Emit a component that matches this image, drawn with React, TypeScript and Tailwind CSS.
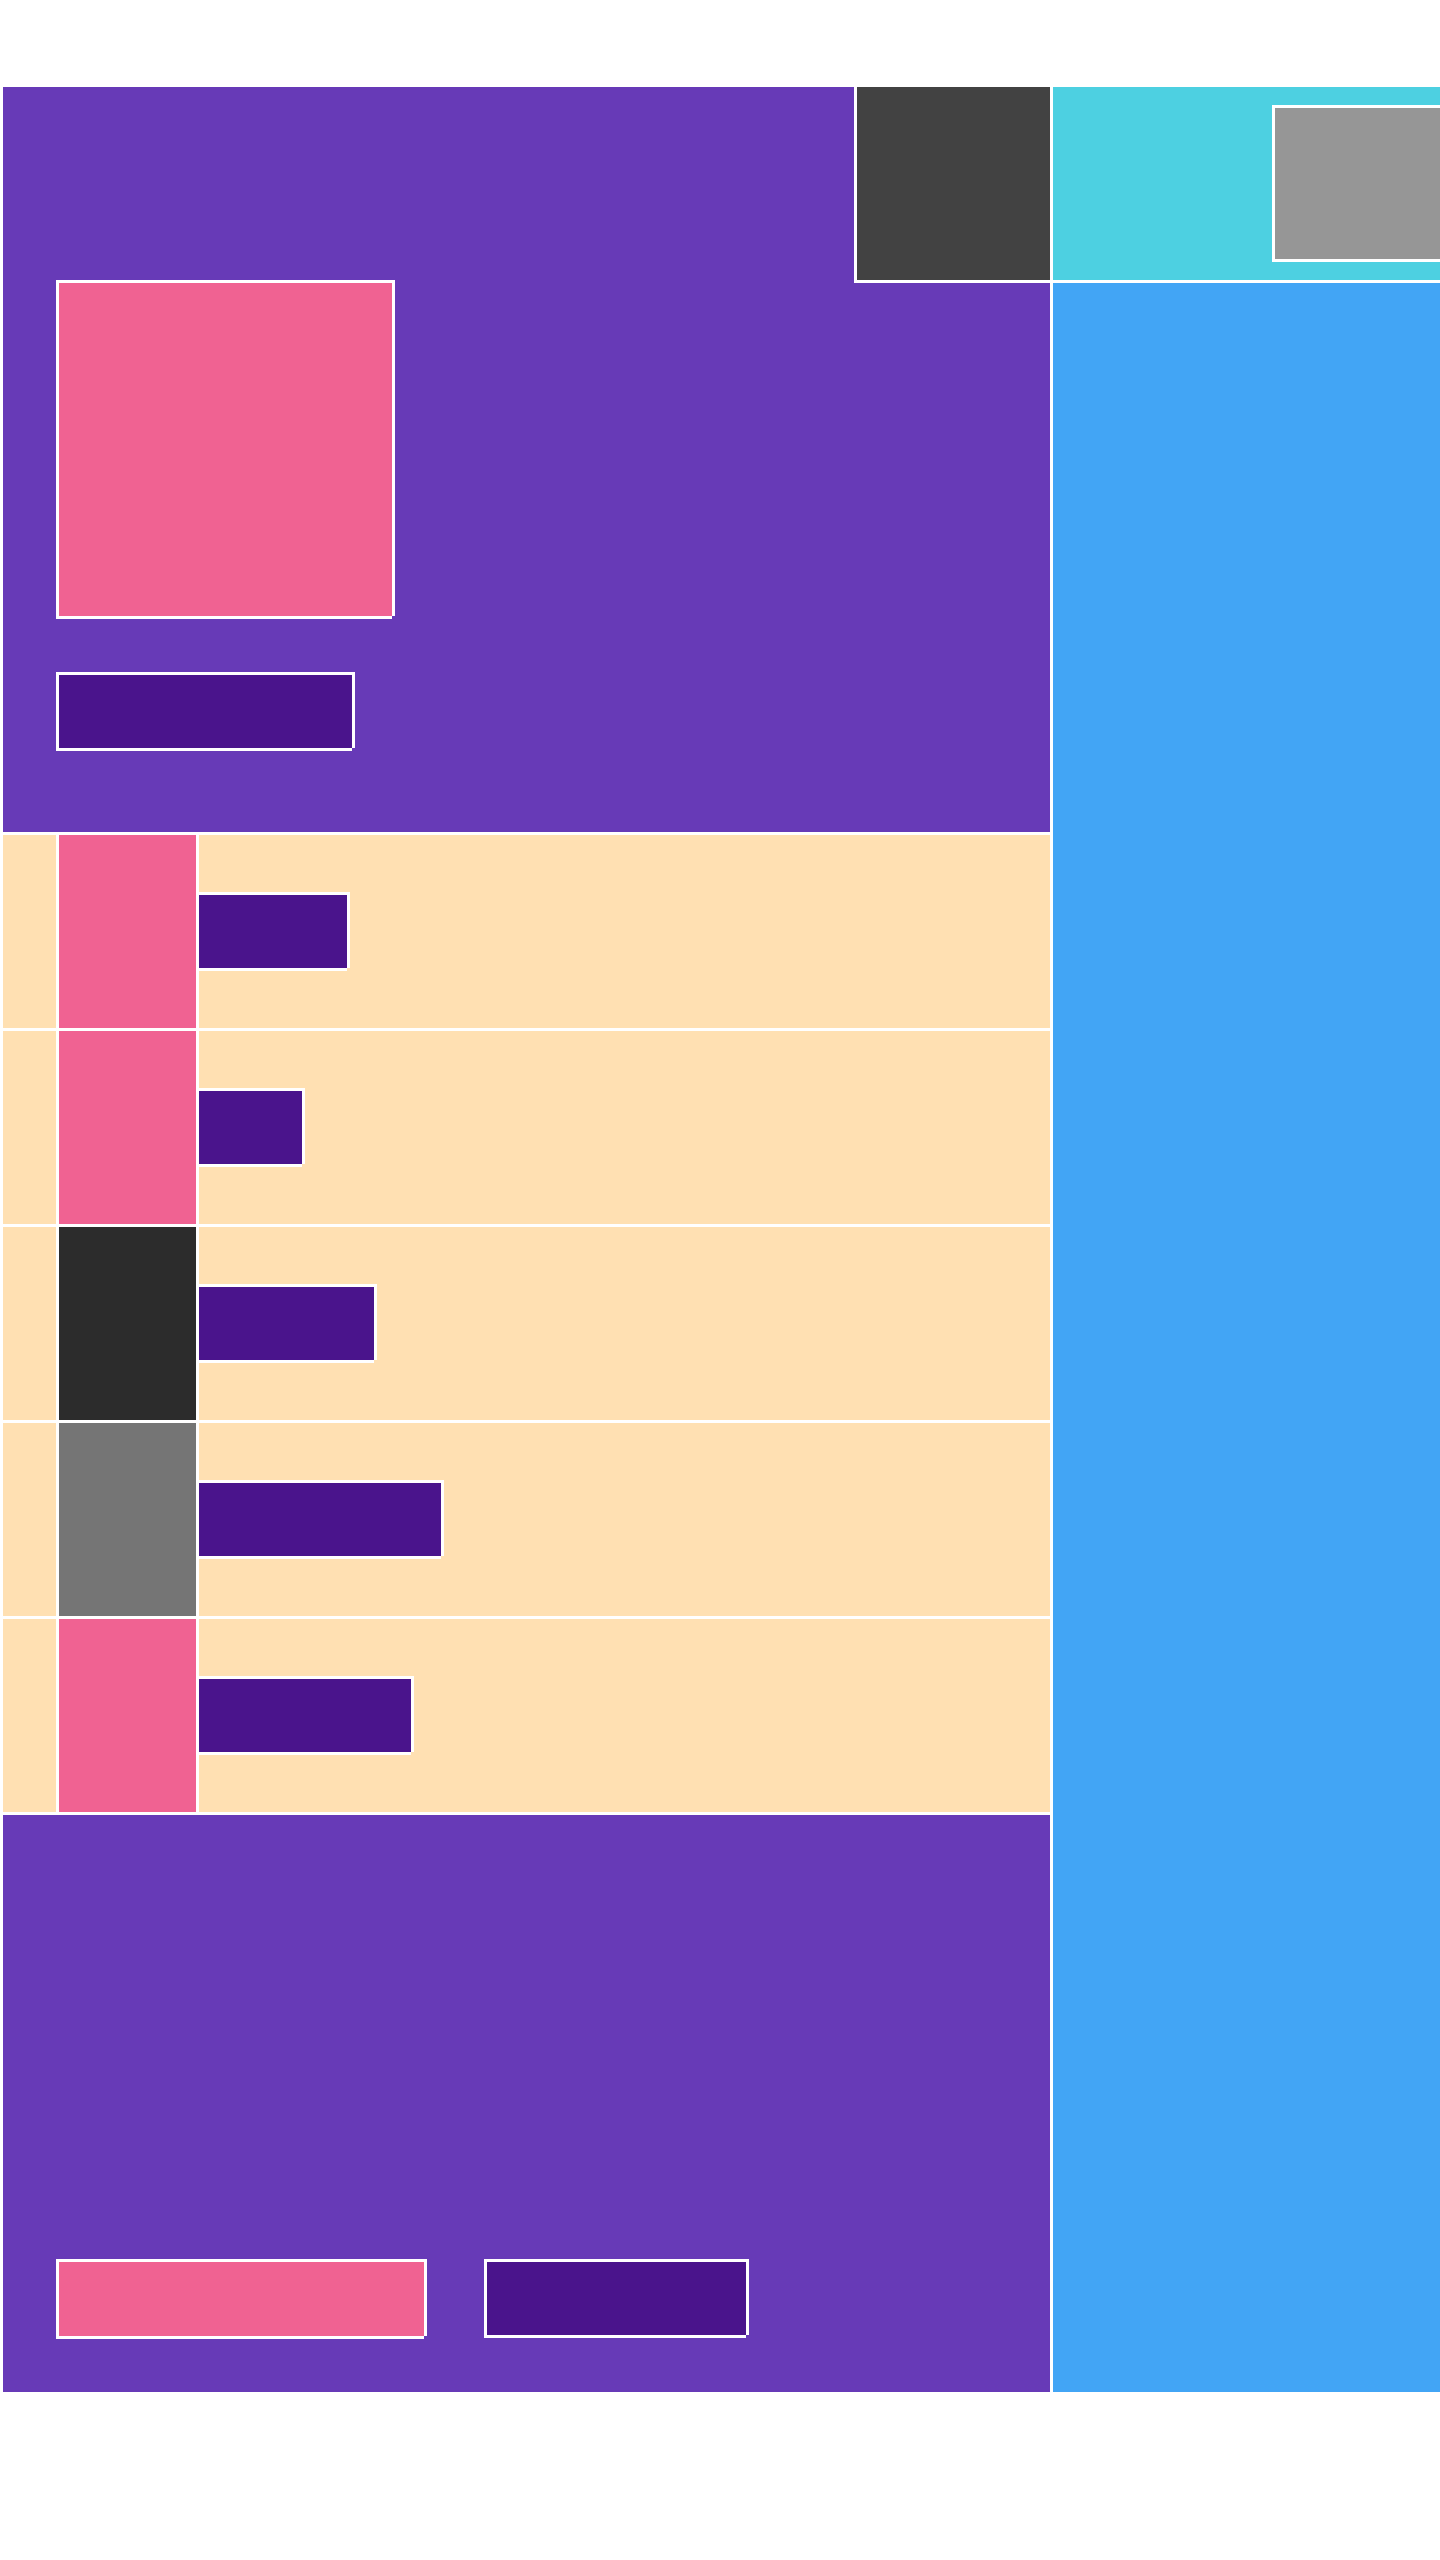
const frame = "border-t-[3px] border-l-[3px] border-white shadow-[3px_0_0_#fff,0_3px_0_#fff]";

const rows = [
  { thumb: "bg-[#f06292]", bar: "w-[151px]" },
  { thumb: "bg-[#f06292]", bar: "w-[106px]" },
  { thumb: "bg-[#2c2c2c]", bar: "w-[178px]" },
  { thumb: "bg-[#757575]", bar: "w-[245px]" },
  { thumb: "bg-[#f06292]", bar: "w-[215px]" },
];

function Row({ thumb, bar }: { thumb: string; bar: string }) {
  return (
    <div className="flex h-[193px] gap-[3px]">
      <div className="w-[53px] bg-[#ffe0b2]" />
      <div className={`w-[137px] ${thumb}`} />
      <div className="flex flex-1 items-start bg-[#ffe0b2]">
        <div className={`-ml-[3px] mt-[57px] h-[76px] bg-[#4a148c] ${frame} ${bar}`} />
      </div>
    </div>
  );
}

export default function App() {
  return (
    <div className="min-h-[2560px] w-full overflow-hidden bg-white pl-[3px] pt-[87px]">
      <div className="flex gap-[3px]">
        {/* main column */}
        <div className="flex w-[1047px] shrink-0 flex-col gap-[3px]">
          <section className="flex h-[745px] flex-col bg-[#673ab7]">
            <div className="flex h-[193px] justify-end">
              <div className="h-[193px] w-[196px] border-l-[3px] border-white bg-[#424242] shadow-[0_3px_0_#fff]" />
            </div>
            <div className={`ml-[53px] h-[336px] w-[336px] bg-[#f06292] ${frame}`} />
            <div className={`ml-[53px] mt-[56px] h-[76px] w-[296px] bg-[#4a148c] ${frame}`} />
          </section>

          {rows.map((r, i) => (
            <Row key={i} thumb={r.thumb} bar={r.bar} />
          ))}

          <section className="flex h-[577px] items-start gap-[60px] bg-[#673ab7] pl-[53px] pt-[444px]">
            <div className={`h-[77px] w-[368px] bg-[#f06292] ${frame}`} />
            <div className={`h-[76px] w-[262px] bg-[#4a148c] ${frame}`} />
          </section>
        </div>

        {/* side column */}
        <div className="flex min-w-0 flex-1 flex-col gap-[3px] overflow-hidden">
          <div className="h-[193px] bg-[#4dd0e1] pl-[219px] pt-[18px]">
            <div className={`h-[154px] w-[320px] bg-[#969696] ${frame}`} />
          </div>
          <div className="h-[2109px] bg-[#42a5f5]" />
        </div>
      </div>
    </div>
  );
}
